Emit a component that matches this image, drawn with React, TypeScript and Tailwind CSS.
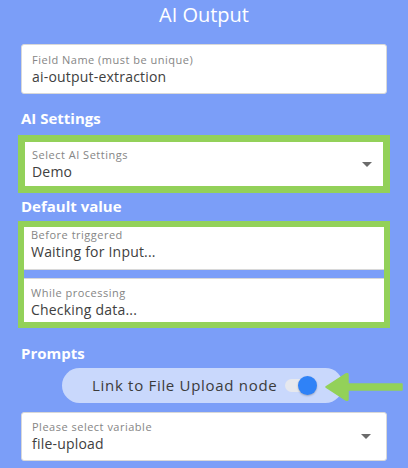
import React from "react";

const font = { fontFamily: '"Open Sans", "DejaVu Sans", sans-serif' };

function Caret() {
  return (
    <svg width="10" height="5" viewBox="0 0 10 5" className="shrink-0">
      <path d="M0 0 H10 L5 5 Z" fill="#6b6b6b" />
    </svg>
  );
}

function FieldText({ label, value }: { label: string; value: string }) {
  return (
    <div className="flex flex-col">
      <span className="text-[11px] leading-[14px] tracking-[0.5px] text-[#858585]">{label}</span>
      <span className="text-[14px] leading-[18px] tracking-[0.2px] text-[#404040] mt-[1px]">{value}</span>
    </div>
  );
}

function Heading({ children, className = "" }: { children: React.ReactNode; className?: string }) {
  return (
    <h2 className={`text-[15px] leading-[20px] font-bold text-white ${className}`}>{children}</h2>
  );
}

export default function App() {
  return (
    <div className="w-[408px] h-[468px] overflow-hidden bg-[#7b9ef8]" style={font}>
      <div className="px-[21px]">
        <h1 className="text-center text-[20px] leading-[26px] pt-[2px] text-white font-medium">
          AI Output
        </h1>

        {/* field name */}
        <div className="mt-[16px] h-[50px] bg-white rounded-[3px] border border-[#d8d8d8] pl-[10px] pt-[8px]">
          <FieldText label="Field Name (must be unique)" value="ai-output-extraction" />
        </div>

        <Heading className="mt-[14px]">AI Settings</Heading>

        <div className="mt-[7px] -mx-[3px] border-[7px] border-[#93d159]">
          <div className="h-[44px] bg-white flex items-center pl-[7px] pr-[11px]">
            <div className="flex-1 pt-[1px]">
              <FieldText label="Select AI Settings" value="Demo" />
            </div>
            <Caret />
          </div>
        </div>

        <Heading className="mt-[3px]">Default value</Heading>

        <div className="mt-[5px] -mx-[3px] border-[6px] border-[#93d159]">
          <div className="h-[43px] bg-white border-b border-[#d8d8d8] pl-[7px] pt-[1px]">
            <FieldText label="Before triggered" value="Waiting for Input..." />
          </div>
          <div className="h-[8px] bg-[#7b9ef8]" />
          <div className="h-[44px] bg-white border-t border-[#d8d8d8] pl-[7px] pt-[7px]">
            <FieldText label="While processing" value="Checking data..." />
          </div>
        </div>

        <Heading className="mt-[15px]">Prompts</Heading>

        <div className="relative mt-[5px] flex">
          <div className="ml-[41px] w-[281px] h-[35px] rounded-full bg-[#c9d8fc] flex items-center pl-[30px]">
            <span className="text-[15px] text-[#3b3b3b] tracking-[0.7px]">Link to File Upload node</span>
            <div className="relative ml-[8px] w-[28px] h-[13px] rounded-full bg-[#e6e8ee]">
              <div className="absolute -top-[3px] right-[-4px] w-[19px] h-[19px] rounded-full bg-[#2f82f7] shadow-[0_1px_2px_rgba(0,0,0,0.25)]" />
            </div>
          </div>
          <svg
            className="absolute left-[304px] top-[4px]"
            width="80"
            height="30"
            viewBox="0 0 80 30"
          >
            <path
              d="M1 15 L21 2 Q23 1 23 3 L23 12 L77 12 L77 18 L23 18 L23 27 Q23 29 21 28 Z"
              fill="#93d159"
              stroke="#93d159"
              strokeLinejoin="round"
              strokeWidth="1.5"
            />
          </svg>
        </div>

        <div className="mt-[9px] h-[49px] bg-white rounded-[3px] border border-[#d8d8d8] flex items-center pl-[10px] pr-[15px]">
          <div className="flex-1 -mt-[1px]">
            <FieldText label="Please select variable" value="file-upload" />
          </div>
          <Caret />
        </div>
      </div>
    </div>
  );
}
